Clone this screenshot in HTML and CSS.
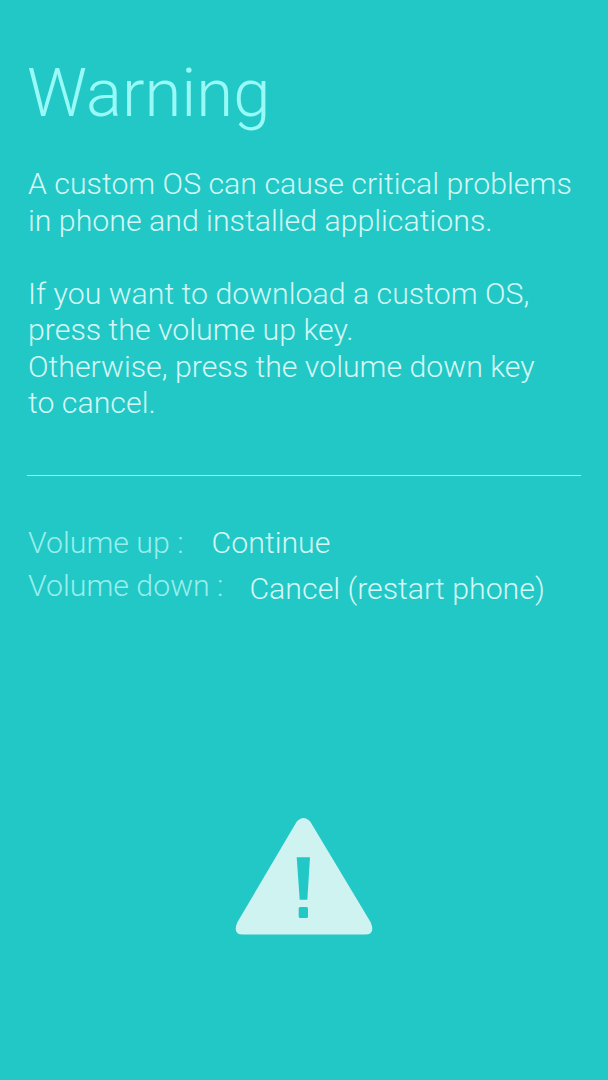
FILE: index.html
```html
<html>
<head>
  <title>Warning</title>
  <link rel="stylesheet" href="styles.css">
</head>
<body>
  <div id="container">
    <h1>Warning</h1>
    <div id="description">
      <p>A custom OS can cause critical problems<br>in phone and installed applications.</p>
      <p>If you want to download a custom OS,<br>press the volume up key.<br>Otherwise, press the volume down key<br>to cancel.</p>
    </div>
    <hr>
    <div class="keyRow upRow">
      <span class="keyName">Volume up :</span>
      <span class="keyAction">Continue</span>
    </div>
    <div class="keyRow downRow">
      <span class="keyName">Volume down :</span>
      <span class="keyAction">Cancel (restart phone)</span>
    </div>
    <div id="iconDiv">
      <svg width="138" height="118" viewBox="0 0 138 118">
        <path fill="#cff3f1" d="M61.500 5 Q68.500 -3 75.500 5 L135.500 105 Q141 117.500 130 117.500 L8 117.500 Q-3 117.500 2.500 105 Z"/>
        <path fill="#22c8c6" d="M61.700 40.300 H75 L72.300 82.700 H64.700 Z"/>
        <rect fill="#22c8c6" x="63.700" y="90" width="9.300" height="11" rx="1.500"/>
      </svg>
    </div>
  </div>
</body>
</html>
```

FILE: styles.css
```css
body {
  margin: 0;
  background-color: #22c8c6;
  font-family: 'Roboto', sans-serif;
  font-weight: 300;
}

#container {
  height: 1080px;
  padding: 0 27px;
  box-sizing: border-box;
}

h1 {
  margin: 0;
  padding-top: 53px;
  font-size: 67px;
  line-height: 80px;
  font-weight: 300;
  color: #98f9f6;
}

#description {
  margin-top: 33px;
  margin-left: 1px;
  font-size: 30.300px;
  line-height: 36.500px;
  color: #d5f7f5;
}

#description p {
  margin: 0 0 36.500px 0;
}

hr {
  margin: 53px 0 0 0;
  border: 0;
  height: 1px;
  background-color: #9cf3f0;
}

.keyRow {
  display: flex;
  margin-left: 1px;
  font-size: 30.300px;
  line-height: 36px;
}

.upRow {
  margin-top: 49px;
}

.downRow {
  margin-top: 7px;
}

.keyName {
  color: #98eeec;
}

.keyAction {
  color: #d5f7f5;
}

.upRow .keyAction {
  margin-left: 28px;
}

.downRow .keyAction {
  margin-left: 26px;
  margin-top: 3px;
}

#iconDiv {
  display: flex;
  justify-content: center;
  margin-top: 210px;
}
```
